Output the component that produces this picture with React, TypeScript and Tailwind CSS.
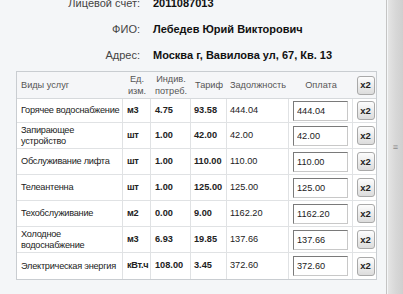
import React from 'react'

type Row = {
  name: string[]
  unit: string
  qty: string
  tariff: string
  debt: string
  pay: string
  tall?: boolean
}

const rows: Row[] = [
  { name: ['Горячее водоснабжение'], unit: 'м3', qty: '4.75', tariff: '93.58', debt: '444.04', pay: '444.04' },
  { name: ['Запирающее', 'устройство'], unit: 'шт', qty: '1.00', tariff: '42.00', debt: '42.00', pay: '42.00', tall: true },
  { name: ['Обслуживание лифта'], unit: 'шт', qty: '1.00', tariff: '110.00', debt: '110.00', pay: '110.00', tall: true },
  { name: ['Телеантенна'], unit: 'шт', qty: '1.00', tariff: '125.00', debt: '125.00', pay: '125.00', tall: true },
  { name: ['Техобслуживание'], unit: 'м2', qty: '0.00', tariff: '9.00', debt: '1162.20', pay: '1162.20', tall: true },
  { name: ['Холодное', 'водоснабжение'], unit: 'м3', qty: '6.93', tariff: '19.85', debt: '137.66', pay: '137.66', tall: true },
  { name: ['Электрическая энергия'], unit: 'кВт.ч', qty: '108.00', tariff: '3.45', debt: '372.60', pay: '372.60', tall: true },
]

const cols = 'grid grid-cols-[106px_28px_40px_36px_62px_64px_25px]'

function X2() {
  return (
    <button className="w-[18px] h-[19px] rounded-[3px] border border-[#a9a9a9] bg-gradient-to-b from-[#fdfdfd] to-[#dcdcdc] text-[9.5px] font-bold text-[#222] leading-none">
      x2
    </button>
  )
}

function InfoLine({ label, value }: { label: string; value: string }) {
  return (
    <div className="flex h-[26px] items-center">
      <div className="w-[140px] text-right text-[11px] text-[#444]">{label}</div>
      <div className="ml-[13px] text-[11px] font-bold text-[#111]">{value}</div>
    </div>
  )
}

export default function App() {
  return (
    <div
      className="flex h-[294px] w-[403px] overflow-hidden bg-[#f4f6f8]"
      style={{ fontFamily: '"Liberation Sans", Arial, sans-serif' }}
    >
      <div className="flex-1">
        <div className="-mt-[10px]">
          <InfoLine label="Лицевой счет:" value="2011087013" />
          <InfoLine label="ФИО:" value="Лебедев Юрий Викторович" />
          <InfoLine label="Адрес:" value="Москва г, Вавилова ул, 67, Кв. 13" />
        </div>

        <div className="ml-[16px] mt-[3px] w-[361px] border border-[#c9cdd1] bg-white text-[9.2px] text-[#222]">
          <div className={`${cols} h-[27px] items-center bg-[#f5f6f8] border-b border-[#d6d9dc] text-[#555] leading-[12px]`}>
            <div className="pl-[4px]">Виды услуг</div>
            <div className="text-center">Ед.<br />изм.</div>
            <div className="text-center">Индив.<br />потреб.</div>
            <div className="text-center">Тариф</div>
            <div className="text-center">Задолжность</div>
            <div className="text-center">Оплата</div>
            <div className="flex justify-center"><X2 /></div>
          </div>

          {rows.map((r, i) => (
            <div
              key={r.name.join(' ')}
              className={`${cols} ${r.tall ? 'h-[26px]' : 'h-[24px]'} ${i < rows.length - 1 ? 'border-b border-[#e0e2e4]' : ''} divide-x divide-[#e0e2e4]`}
            >
              <div className="flex flex-col justify-center pl-[4px] leading-[11px] whitespace-nowrap tracking-[-0.25px]">
                {r.name.map((n) => (
                  <span key={n}>{n}</span>
                ))}
              </div>
              <div className="flex items-center pl-[4px] font-bold tracking-[-0.3px] whitespace-nowrap">{r.unit}</div>
              <div className="flex items-center pl-[4px] font-bold">{r.qty}</div>
              <div className="flex items-center pl-[3px] font-bold">{r.tariff}</div>
              <div className="flex items-center pl-[3px]">{r.debt}</div>
              <div className="flex items-center pl-[4px]">
                <input
                  readOnly
                  value={r.pay}
                  className="h-[20px] w-[55px] border border-t-[#7a7a7a] border-l-[#7a7a7a] border-r-[#c8c8c8] border-b-[#c8c8c8] bg-white px-[3px] text-[9.2px] text-[#222] outline-none"
                />
              </div>
              <div className="flex items-center justify-center"><X2 /></div>
            </div>
          ))}
        </div>

        <div className="mt-[5px]">
          <InfoLine label="Сумма:" value="2393.50" />
        </div>
      </div>

      <div className="flex w-[17px] border-l border-[#c4c4c4]">
        <div className="ml-[1px] flex flex-1 items-center justify-center bg-gradient-to-r from-[#e4e4e4] via-[#d8d8d8] to-[#cfcfcf] text-[9px] leading-none text-[#8a8a8a]">
          ≡
        </div>
      </div>
    </div>
  )
}
